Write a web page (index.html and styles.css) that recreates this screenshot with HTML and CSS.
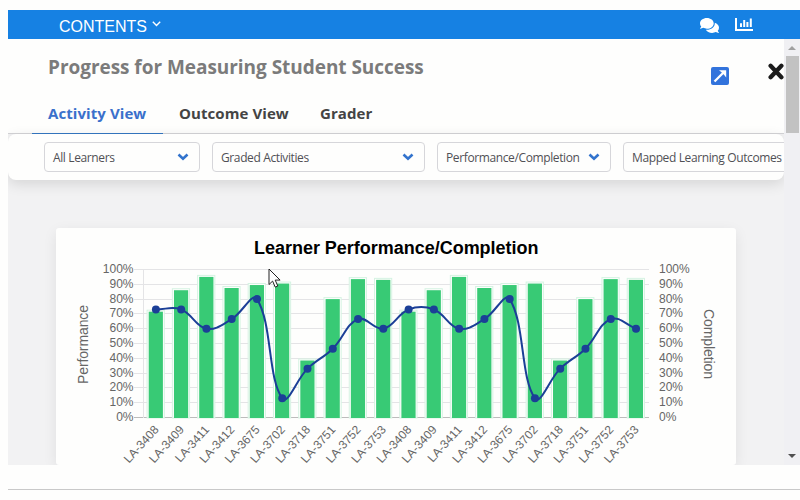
FILE: index.html
```html
<!DOCTYPE html>
<html lang="en">
<head>
  <meta charset="utf-8">
  <title>Progress for Measuring Student Success</title>
  <link rel="stylesheet" href="styles.css">
</head>
<body>
  <div class="page">
    <header class="topbar">
      <div class="contents-menu">
        <span class="contents-label">CONTENTS</span>
        <svg width="9" height="6" viewBox="0 0 9 6"><path d="M.8 .8 4.5 4.500 8.200 .8" fill="none" stroke="#fff" stroke-width="1.4"/></svg>
      </div>
      <div class="topbar-icons">
        <svg width="19" height="17" viewBox="0 0 576 512" preserveAspectRatio="none"><path fill="#fff" d="M416 192c0-88.400-93.100-160-208-160S0 103.600 0 192c0 34.300 14.100 65.900 38 92-13.400 30.200-35.500 54.200-35.800 54.500-2.200 2.300-2.800 5.700-1.500 8.700S4.800 352 8 352c36.600 0 66.900-12.300 88.700-25 32.200 15.700 70.300 25 111.300 25 114.900 0 208-71.600 208-160zm122 220c23.900-26 38-57.700 38-92 0-66.900-53.500-124.200-129.300-148.100.9 6.600 1.300 13.300 1.300 20.100 0 105.900-107.700 192-240 192-10.800 0-21.300-.8-31.700-1.900C207.800 439.600 281.800 480 368 480c41 0 79.100-9.200 111.300-25 21.800 12.700 52.100 25 88.700 25 3.200 0 6.100-1.900 7.300-4.800 1.300-2.900.7-6.300-1.500-8.700-.3-.3-22.400-24.200-35.800-54.500z"/></svg>
        <svg width="18" height="14" viewBox="0 0 18 14"><path d="M1 1v11.900h17M6 10V6.200M9.200 10V3M12.400 10V5M15.800 10V1.500" fill="none" stroke="#fff" stroke-width="2"/></svg>
      </div>
    </header>

    <div class="frame">
      <main class="content">
        <div class="title-row">
          <h1 class="title">Progress for Measuring Student Success</h1>
          <svg class="popout" width="18" height="18" viewBox="0 0 18 18"><rect width="18" height="18" rx="2" fill="#3273dc"/><path d="M3.500 14.500 12.500 5.500" stroke="#fff" stroke-width="2.300" fill="none"/><path d="M8 3.200h7.200v7.200l-2-2.400-3-3z" fill="#fff"/></svg>
          <svg class="close" width="16" height="17" viewBox="0 0 16 17"><path d="M2.600 2.800 13.400 14.200M13.400 2.800 2.600 14.200" stroke="#1b1b1b" stroke-width="4.300" stroke-linecap="round"/></svg>
        </div>

        <nav class="tabs">
          <a class="tab tab-activity active">Activity View</a>
          <a class="tab tab-outcome">Outcome View</a>
          <a class="tab tab-grader">Grader</a>
        </nav>

        <div class="filters">
          <div class="select select-learners"><span>All Learners</span><svg class="chevron" width="12" height="8" viewBox="0 0 12 8"><path d="M1.500 1.500 6 5.700 10.500 1.500"/></svg></div>
          <div class="select select-activities"><span>Graded Activities</span><svg class="chevron" width="12" height="8" viewBox="0 0 12 8"><path d="M1.500 1.500 6 5.700 10.500 1.500"/></svg></div>
          <div class="select select-metric"><span>Performance/Completion</span><svg class="chevron" width="12" height="8" viewBox="0 0 12 8"><path d="M1.500 1.500 6 5.700 10.500 1.500"/></svg></div>
          <div class="select select-outcomes"><span>Mapped Learning Outcomes</span></div>
        </div>

        <section class="chart-card">
          <svg id="chart" class="chart" width="680" height="237" viewBox="56 228 680 237">
            <text class="chart-title" x="254" y="254" textLength="284.500">Learner Performance/Completion</text>
            <text class="axis-title" transform="translate(88 384) rotate(-90)" textLength="79">Performance</text>
            <text class="axis-title" transform="translate(704 309) rotate(90)" textLength="70">Completion</text>
          </svg>
        </section>
      </main>

      <div class="scrollbar">
        <div class="arrow-up"></div>
        <div class="thumb"></div>
        <div class="arrow-down"></div>
      </div>
    </div>

    <hr class="divider">
  </div>

  <svg class="cursor" width="14" height="21" viewBox="0 0 14 21"><path d="M1 1v15.500l3.600-3.400 2.600 6 2.600-1.100-2.600-5.900h4.900z" fill="#fff" stroke="#222" stroke-width="1"/></svg>

  <script>
    var learners = ["LA-3408", "LA-3409", "LA-3411", "LA-3412", "LA-3675", "LA-3702", "LA-3718", "LA-3751", "LA-3752", "LA-3753"];
    var performance = [71.5, 86, 95, 87.5, 89.5, 90.5, 38.5, 80, 93.5, 93];
    var completion = [73, 73, 60, 66.5, 80, 13, 33, 46.5, 66.5, 60];

    // The class is listed twice along the axis
    learners = learners.concat(learners);
    performance = performance.concat(performance);
    completion = completion.concat(completion);

    var chart = document.getElementById("chart");
    var left = 143, right = 649, step = 25.27;

    function yPos(value) {
      return 417.5 - value * 1.48;
    }

    function xPos(i) {
      return left + 12.9 + i * step;
    }

    function add(name, attrs, text) {
      var el = document.createElementNS("http://www.w3.org/2000/svg", name);
      for (var key in attrs) {
        el.setAttribute(key, attrs[key]);
      }
      if (text) el.textContent = text;
      chart.appendChild(el);
    }

    // Grid lines and percent labels
    for (var p = 0; p <= 100; p += 10) {
      var y = Math.round(yPos(p) - 0.5) + 0.5;
      add("line", { x1: 134, x2: right, y1: y, y2: y, "class": p ? "grid" : "grid zero" });
      add("text", { x: 133.5, y: y + 3.7, "class": "tick tick-left" }, p + "%");
      add("text", { x: 659, y: y + 3.7, "class": "tick" }, p + "%");
    }
    add("line", { x1: left + 0.5, x2: left + 0.5, y1: 269, y2: 418, "class": "grid" });

    // Bars
    performance.forEach(function (value, i) {
      var top = yPos(value);
      add("rect", { x: xPos(i) - 8.8, y: top - 1.5, width: 17.2, height: 418 - top + 1.5, "class": "bar-edge" });
      add("rect", { x: xPos(i) - 7.2, y: top, width: 14.2, height: 418 - top, "class": "bar" });
      add("text", { transform: "translate(" + (xPos(i) + 3.5) + " 430) rotate(-48)", "class": "tick tick-left" }, learners[i]);
    });

    // Smooth line through the completion values
    var points = completion.map(function (value, i) {
      return { x: xPos(i), y: yPos(value) };
    });
    var controls = points.map(function (cur, i) {
      var prev = points[i - 1] || cur;
      var next = points[i + 1] || cur;
      var d1 = Math.hypot(cur.x - prev.x, cur.y - prev.y);
      var d2 = Math.hypot(next.x - cur.x, next.y - cur.y);
      var a = 0.4 * d1 / (d1 + d2);
      var b = 0.4 * d2 / (d1 + d2);
      return {
        inX: cur.x - a * (next.x - prev.x), inY: cur.y - a * (next.y - prev.y),
        outX: cur.x + b * (next.x - prev.x), outY: cur.y + b * (next.y - prev.y)
      };
    });
    var d = "M" + points[0].x + " " + points[0].y;
    for (var i = 1; i < points.length; i++) {
      d += "C" + [controls[i - 1].outX, controls[i - 1].outY, controls[i].inX, controls[i].inY, points[i].x, points[i].y].join(" ");
    }
    add("path", { d: d, "class": "line" });
    points.forEach(function (point) {
      add("circle", { cx: point.x, cy: point.y, r: 4, "class": "point" });
    });
  </script>
</body>
</html>
```
FILE: styles.css
```css
body {
  margin: 0;
  background-color: #fefefd;
  font-family: "Open Sans", "Noto Sans", sans-serif;
  overflow: hidden;
}

svg {
  display: block;
  flex-shrink: 0;
}

.page {
  padding: 10px 0 0 8px;
}

/* Blue bar */
.topbar {
  display: flex;
  justify-content: space-between;
  height: 29px;
  padding: 0 47px 0 51px;
  background-color: #1681e3;
}

.contents-menu {
  display: flex;
  gap: 5px;
  color: #fff;
  font-family: "Liberation Sans", Arial, sans-serif;
  font-size: 16px;
  line-height: 33px;
}

.contents-menu svg {
  margin-top: 11px;
}

.topbar-icons {
  display: flex;
  gap: 16px;
  padding-top: 7px;
}

/* Scrolling frame */
.frame {
  display: flex;
  height: 426px;
  overflow: hidden;
}

.content {
  width: 776px;
  background-color: #f2f2f3;
  overflow: hidden;
}

.title-row {
  display: flex;
  height: 56px;
  padding-left: 40px;
  background-color: #fefefd;
}

.title {
  flex-shrink: 0;
  width: 663px;
  margin: 0;
  color: #7b7b7b;
  font-size: 19px;
  font-weight: bold;
  line-height: 56px;
  letter-spacing: -0.04px;
  white-space: nowrap;
}

.popout {
  margin-top: 28px;
}

.close {
  margin: 24px 0 0 39px;
}

.tabs {
  display: flex;
  height: 38px;
  padding-left: 24px;
  border-bottom: 1px solid #d3d3d6;
  background-color: #fefefd;
}

.tab {
  box-sizing: border-box;
  height: 39px;
  padding-left: 16px;
  color: #444;
  font-size: 15px;
  font-weight: bold;
  line-height: 37px;
  letter-spacing: 0.08px;
  white-space: nowrap;
}

.tab-activity {
  width: 131px;
}

.tab-outcome {
  width: 141px;
}

.tab.active {
  color: #3a70cb;
  border-bottom: 1px solid #3273bc;
}

.filters {
  display: flex;
  gap: 12px;
  height: 30px;
  padding: 8px 0 8px 36px;
  border-radius: 8px;
  background-color: #fefefd;
  box-shadow: 0 4px 14px rgba(0, 0, 0, 0.12);
}

.select {
  display: flex;
  flex-shrink: 0;
  align-items: center;
  justify-content: space-between;
  box-sizing: border-box;
  height: 30px;
  padding: 0 10px 0 8px;
  border: 1px solid #d6d6da;
  border-radius: 4px;
  color: #505055;
  font-size: 12px;
  letter-spacing: -0.38px;
  white-space: nowrap;
}

.select-learners {
  width: 156px;
}

.select-activities {
  width: 213px;
}

.select-metric {
  width: 174px;
}

.select-outcomes {
  width: 190px;
}

.chevron {
  fill: none;
  stroke: #3273cd;
  stroke-width: 2.6;
}

/* Chart */
.chart-card {
  width: 680px;
  margin: 48px 0 0 48px;
  border-radius: 3px;
  background-color: #fefefd;
  box-shadow: 0 4px 14px rgba(0, 0, 0, 0.08);
}

.chart {
  font-family: "Liberation Sans", Arial, sans-serif;
}

.chart-title {
  fill: #000;
  font-size: 18px;
  font-weight: bold;
}

.axis-title {
  fill: #666;
  font-size: 14px;
}

.tick {
  fill: #666;
  font-size: 12px;
}

.tick-left {
  text-anchor: end;
}

.grid {
  stroke: #e4e4e6;
}

.zero {
  stroke: #bcbcbc;
}

.bar-edge {
  fill: #fefefd;
  stroke: #d5f3e2;
}

.bar {
  fill: #38ca75;
}

.line {
  fill: none;
  stroke: #1b3f97;
  stroke-width: 2;
}

.point {
  fill: #1b3f97;
}

/* Scrollbar */
.scrollbar {
  display: flex;
  flex-direction: column;
  align-items: center;
  width: 16px;
  background-color: #f0f0f3;
}

.arrow-up {
  margin-top: 7px;
  border: 4px solid transparent;
  border-top: 0;
  border-bottom-color: #a0a0a0;
}

.thumb {
  width: 13px;
  height: 77px;
  margin: 6px 0 auto 1px;
  background-color: #c2c2c2;
}

.arrow-down {
  margin-bottom: 7px;
  border: 4px solid transparent;
  border-bottom: 0;
  border-top-color: #505050;
}

.divider {
  height: 1px;
  margin: 24px 0 0;
  border: 0;
  background-color: #c9c9c9;
}

/* Mouse pointer over the chart */
.cursor {
  position: absolute;
  left: 268px;
  top: 268px;
}
```
